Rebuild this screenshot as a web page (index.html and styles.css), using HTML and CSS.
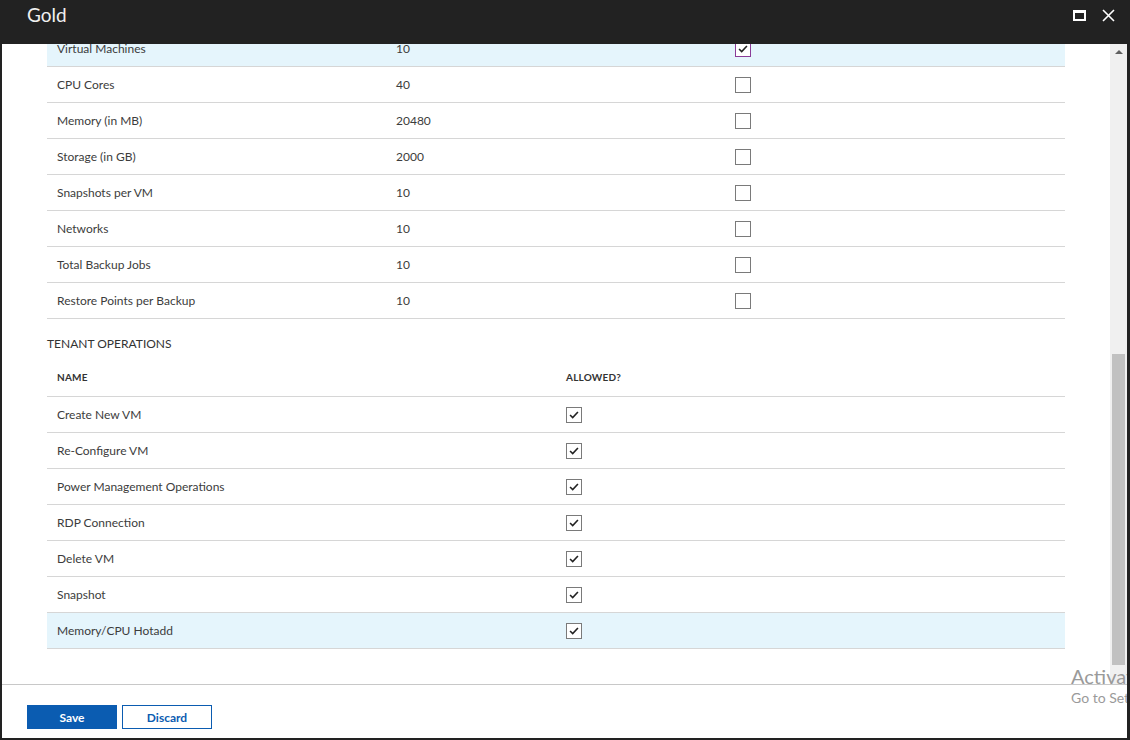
FILE: index.html
```html
<!DOCTYPE html>
<html>
<head>
<meta charset="utf-8">
<link rel="stylesheet" href="styles.css">
</head>
<body>
<div class="window">
  <div class="titlebar">
    <div class="title">Gold</div>
    <div class="win-actions">
      <span class="maximize"></span>
      <svg class="close" width="13" height="13" viewBox="0 0 13 13"><path d="M1 1L12 12M12 1L1 12" stroke="#fff" stroke-width="1.6" fill="none"/></svg>
    </div>
  </div>
  <div class="main">
    <div class="viewport">
      <div class="content">
        <div class="quota">
          <div class="qrow selected"><span>Virtual Machines</span><span>10</span><span class="cb checked focus"><svg viewBox="0 0 16 16"><path d="M3.5 8l3 3 6-6.5" stroke="#222" stroke-width="1.8" fill="none"/></svg></span></div>
          <div class="qrow"><span>CPU Cores</span><span>40</span><span class="cb"></span></div>
          <div class="qrow"><span>Memory (in MB)</span><span>20480</span><span class="cb"></span></div>
          <div class="qrow"><span>Storage (in GB)</span><span>2000</span><span class="cb"></span></div>
          <div class="qrow"><span>Snapshots per VM</span><span>10</span><span class="cb"></span></div>
          <div class="qrow"><span>Networks</span><span>10</span><span class="cb"></span></div>
          <div class="qrow"><span>Total Backup Jobs</span><span>10</span><span class="cb"></span></div>
          <div class="qrow"><span>Restore Points per Backup</span><span>10</span><span class="cb"></span></div>
        </div>
        <div class="section-title">TENANT OPERATIONS</div>
        <div class="ops">
          <div class="orow head"><span>NAME</span><span>ALLOWED?</span></div>
          <div class="orow"><span>Create New VM</span><span class="cb checked"><svg viewBox="0 0 16 16"><path d="M3.5 8l3 3 6-6.5" stroke="#222" stroke-width="1.8" fill="none"/></svg></span></div>
          <div class="orow"><span>Re-Configure VM</span><span class="cb checked"><svg viewBox="0 0 16 16"><path d="M3.5 8l3 3 6-6.5" stroke="#222" stroke-width="1.8" fill="none"/></svg></span></div>
          <div class="orow"><span>Power Management Operations</span><span class="cb checked"><svg viewBox="0 0 16 16"><path d="M3.5 8l3 3 6-6.5" stroke="#222" stroke-width="1.8" fill="none"/></svg></span></div>
          <div class="orow"><span>RDP Connection</span><span class="cb checked"><svg viewBox="0 0 16 16"><path d="M3.5 8l3 3 6-6.5" stroke="#222" stroke-width="1.8" fill="none"/></svg></span></div>
          <div class="orow"><span>Delete VM</span><span class="cb checked"><svg viewBox="0 0 16 16"><path d="M3.5 8l3 3 6-6.5" stroke="#222" stroke-width="1.8" fill="none"/></svg></span></div>
          <div class="orow"><span>Snapshot</span><span class="cb checked"><svg viewBox="0 0 16 16"><path d="M3.5 8l3 3 6-6.5" stroke="#222" stroke-width="1.8" fill="none"/></svg></span></div>
          <div class="orow selected"><span>Memory/CPU Hotadd</span><span class="cb checked"><svg viewBox="0 0 16 16"><path d="M3.5 8l3 3 6-6.5" stroke="#222" stroke-width="1.8" fill="none"/></svg></span></div>
        </div>
      </div>
    </div>
    <div class="scrollbar">
      <div class="arrow-up"></div>
      <div class="thumb"></div>
    </div>
  </div>
  <div class="footer">
    <button class="btn primary">Save</button>
    <button class="btn secondary">Discard</button>
  </div>
  <div class="watermark">
    <div class="wm1">Activate Windows</div>
    <div class="wm2">Go to Settings to activate Windows.</div>
  </div>
</div>
</body>
</html>
```
FILE: styles.css
```css
* { box-sizing: border-box; }
html, body { margin: 0; padding: 0; background: #fff; }
body { font-family: "Segoe UI", Lato, "Noto Sans", sans-serif; color: #333; }

.window {
  position: relative;
  width: 1130px;
  height: 740px;
  display: flex;
  flex-direction: column;
  border-left: 2px solid #222;
  border-right: 3px solid #222;
  border-bottom: 2px solid #222;
  overflow: hidden;
  background: #fff;
}

.titlebar {
  height: 44px;
  flex: 0 0 44px;
  background: #222;
  display: flex;
  justify-content: space-between;
  align-items: flex-start;
  padding: 3px 12px 0 25px;
}
.title { color: #f0f0f0; font-size: 19px; line-height: 24px; }
.win-actions { display: flex; align-items: center; gap: 16px; padding-top: 6px; }
.maximize {
  display: block;
  width: 13px;
  height: 11px;
  border: 2px solid #fff;
  border-top-width: 3px;
}
.close { display: block; }

.main { flex: 1; display: flex; min-height: 0; }
.viewport { flex: 1; overflow: hidden; }
.content { margin-top: -13px; padding-left: 45px; padding-right: 45px; }

.quota { width: 1018px; }
.qrow, .orow {
  height: 36px;
  display: grid;
  align-items: center;
  padding-left: 10px;
  border-bottom: 1px solid #d6d6d6;
  font-size: 12px;
  color: #3c3c3c;
}
.qrow { grid-template-columns: 339px 339px 1fr; }
.orow { grid-template-columns: 509px 1fr; }
.selected { background: #e5f5fc; }

.section-title {
  font-size: 12px;
  color: #333;
  line-height: 16px;
  margin-top: 17px;
  margin-bottom: 5px;
}
.ops { width: 1018px; }
.orow.head { height: 40px; font-size: 10px; font-weight: bold; color: #333; letter-spacing: 0.2px; }

.cb {
  display: block;
  width: 16px;
  height: 16px;
  border: 1px solid #7a7a7a;
  background: #fff;
  position: relative;
}
.cb svg { position: absolute; left: 0; top: 0; width: 14px; height: 14px; }
.cb.focus { border-color: #8a3c98; }

.scrollbar {
  width: 17px;
  flex: 0 0 17px;
  background: #f0f0f0;
  display: flex;
  flex-direction: column;
  align-items: center;
}
.arrow-up {
  margin-top: 6px;
  width: 0; height: 0;
  border-left: 4px solid transparent;
  border-right: 4px solid transparent;
  border-bottom: 4px solid #606060;
}
.thumb {
  margin-top: 300px;
  width: 13px;
  height: 311px;
  background: #c1c1c1;
}

.footer {
  height: 54px;
  flex: 0 0 54px;
  border-top: 1px solid #c8c8c8;
  display: flex;
  align-items: flex-start;
  gap: 5px;
  padding: 20px 0 0 25px;
}
.btn {
  width: 90px;
  height: 24px;
  font-family: inherit;
  font-size: 12px;
  font-weight: bold;
  cursor: pointer;
}
.primary { background: #0b5cb1; color: #fff; border: 1px solid #0b5cb1; }
.secondary { background: #fff; color: #0b5cb1; border: 1px solid #0b5cb1; }

.watermark {
  position: absolute;
  left: 1069px;
  top: 663px;
  white-space: nowrap;
  color: #9a9a9a;
}
.wm1 { font-size: 20px; line-height: 26px; }
.wm2 { font-size: 14px; line-height: 18px; }
```
